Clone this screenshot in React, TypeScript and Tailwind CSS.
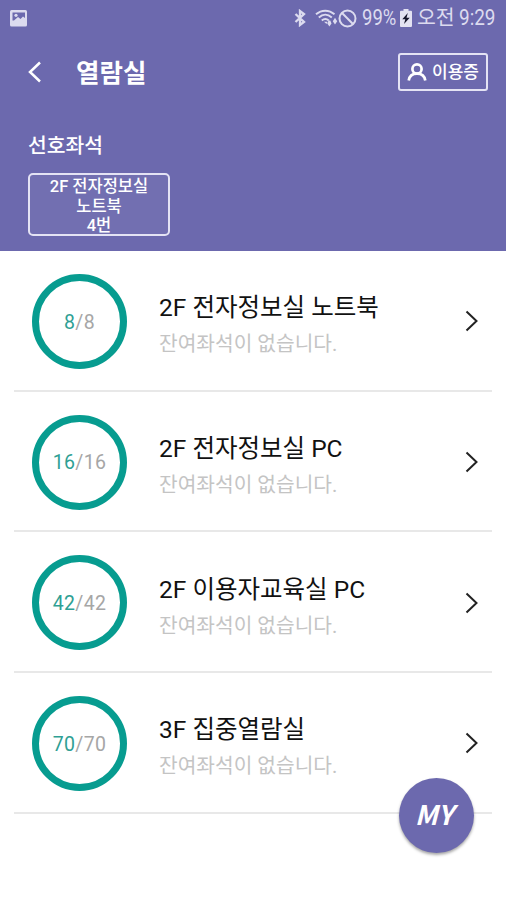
import type { ReactNode } from 'react'

interface Room {
  name: string
  used: number
  total: number
}

const rooms: Room[] = [
  { name: '2F 전자정보실 노트북', used: 8, total: 8 },
  { name: '2F 전자정보실 PC', used: 16, total: 16 },
  { name: '2F 이용자교육실 PC', used: 42, total: 42 },
  { name: '3F 집중열람실', used: 70, total: 70 },
]

function PictureIcon() {
  return (
    <svg className="h-[17px] w-[17px]" viewBox="0 0 17 17">
      <rect width="17" height="16.500" rx="1.500" fill="#dcdbef" />
      <path d="M2.500 2.500h12.500v5.500l-2-1.500-2.500 2.500-2.500-2-4 3.500h-1.500z" fill="#6c69ae" />
      <circle cx="6" cy="5.300" r="1.600" fill="#dcdbef" />
    </svg>
  )
}

function BluetoothIcon() {
  return (
    <svg className="h-[18px] w-3" viewBox="0 0 12 18" fill="none" stroke="currentColor" strokeWidth="2.300">
      <path d="M1.500 5l8.500 8-4 3v-14l4 3-8.500 8" />
    </svg>
  )
}

function WifiIcon() {
  return (
    <svg className="h-[18px] w-[23px]" viewBox="0 0 23 18" fill="none" stroke="currentColor" strokeWidth="1.900">
      <path d="M1 5.300c5.500-4.800 13-4.800 18.500 0M3.800 8.500c4-3.600 9-3.600 13 0M6.800 11.500c2.200-2 4.800-2 7 0" />
      <path d="M9 12.700h3.500l-1 2.300zM12.300 14.500l1.200-3h1.800l1.200 3-2.100 3zM20 8.800l2.200 3.500-2.200 3.200-2.200-3.200z" fill="currentColor" stroke="none" />
    </svg>
  )
}

function BlockedIcon() {
  return (
    <svg className="h-[19px] w-[19px]" viewBox="0 0 19 19" fill="none" stroke="currentColor" strokeWidth="2">
      <circle cx="9.500" cy="9.500" r="8" />
      <path d="M3.800 3.800l11.400 11.400" />
    </svg>
  )
}

function BatteryIcon() {
  return (
    <svg className="h-[18px] w-3" viewBox="0 0 12 18">
      <path d="M3.500 0h5v1.800H11a1 1 0 011 1V17a1 1 0 01-1 1H1a1 1 0 01-1-1V2.800a1 1 0 011-1h2.500z" fill="#e3e2f2" />
      <path d="M7.800 4L2.300 10.300h3L4 15l5.700-6.300H6.500z" fill="#16162c" />
    </svg>
  )
}

function UserIcon() {
  return (
    <svg className="h-[18px] w-5" viewBox="0 0 20 18" fill="none" stroke="currentColor" strokeWidth="2.700">
      <circle cx="10" cy="6" r="4.600" />
      <path d="M1.700 17.500c.6-4.200 3.500-6.900 8.300-6.900s7.700 2.700 8.300 6.900" />
    </svg>
  )
}

function Chevron({ className, children }: { className: string; children: ReactNode }) {
  return (
    <svg className={className} viewBox="0 0 14 22" fill="none" stroke="currentColor">
      {children}
    </svg>
  )
}

function StatusBar() {
  return (
    <div className="flex h-9 items-center justify-between pl-[10px] pr-[11px] text-[#dcdbef]">
      <PictureIcon />
      <div className="flex items-center">
        <div className="mr-[9px]">
          <BluetoothIcon />
        </div>
        <WifiIcon />
        <BlockedIcon />
        <span className="ml-[5px] w-[35px] origin-left scale-x-[0.84] whitespace-nowrap text-[22px] leading-none">99%</span>
        <div className="ml-[3px]">
          <BatteryIcon />
        </div>
        <span className="ml-[5px] w-[37px] whitespace-nowrap text-[20.500px] leading-none">오전</span>
        <span className="ml-[5px] w-[36px] origin-left scale-x-[0.86] whitespace-nowrap text-[22px] leading-none">9:29</span>
      </div>
    </div>
  )
}

function RoomRow({ room }: { room: Room }) {
  return (
    <li className="mx-[14px] flex h-[140.700px] items-center border-b-2 border-[#e8e8e8] pl-[18px] pr-[13px] pt-[2px]">
      <div className="flex size-[95px] shrink-0 items-center justify-center rounded-full border-[7px] border-[#079c90] pt-[2px] text-[19.500px] tracking-[0.3px] text-[#a6a6a6]">
        <span className="text-[#2f9f94]">{room.used}</span>/{room.total}
      </div>
      <div className="ml-8 flex-1 whitespace-nowrap pt-[10px]">
        <p className="text-[24.500px] leading-9 text-[#111]">{room.name}</p>
        <p className="text-[20.300px] leading-9 text-[#c4c4c4]">잔여좌석이 없습니다.</p>
      </div>
      <Chevron className="h-[22px] w-[14px] text-[#222]">
        <path d="M1.500 1.500L11.500 11l-10 9.500" strokeWidth="2" />
      </Chevron>
    </li>
  )
}

export default function App() {
  return (
    <div className="relative h-[900px] w-full overflow-hidden bg-white font-[Roboto,'Noto_Sans_CJK_KR',sans-serif]">
      <header className="h-[251px] bg-[#6c69ae] text-white">
        <StatusBar />
        <div className="flex h-[72px] items-center pl-7 pr-[18px]">
          <Chevron className="h-[22px] w-[14px]">
            <path d="M12 1.500L2 11l10 9.500" strokeWidth="2.500" />
          </Chevron>
          <h1 className="ml-[34px] flex-1 pt-1 text-[25.500px] font-bold leading-none">열람실</h1>
          <button className="flex h-[38px] w-[90px] items-center justify-center gap-[5px] rounded-[3px] border-2 border-[#e4e3f4] text-[17px] font-medium" type="button">
            <UserIcon />
            <span className="pt-[2px]">이용증</span>
          </button>
        </div>
        <section className="pl-7 pt-6">
          <h2 className="text-[20.400px] font-medium leading-7">선호좌석</h2>
          <button className="mt-[13px] flex h-[63px] w-[142px] flex-col items-center justify-center rounded-[5px] border-2 border-[#e4e3f4] bg-[#726fb1] pt-1 text-[16.500px] font-medium leading-[19.500px]" type="button">
            <span>2F 전자정보실</span>
            <span>노트북</span>
            <span>4번</span>
          </button>
        </section>
      </header>

      <ul>
        {rooms.map((room) => (
          <RoomRow key={room.name} room={room} />
        ))}
      </ul>

      <button
        className="absolute left-[399px] top-[778px] size-[75px] rounded-full bg-[#6c69ae] pb-[3px] pr-[5px] font-['Noto_Sans_CJK_KR',sans-serif] text-[27px] font-bold italic text-white shadow-[0_2px_3px_rgba(0,0,0,0.35)]"
        type="button"
      >
        MY
      </button>
    </div>
  )
}
